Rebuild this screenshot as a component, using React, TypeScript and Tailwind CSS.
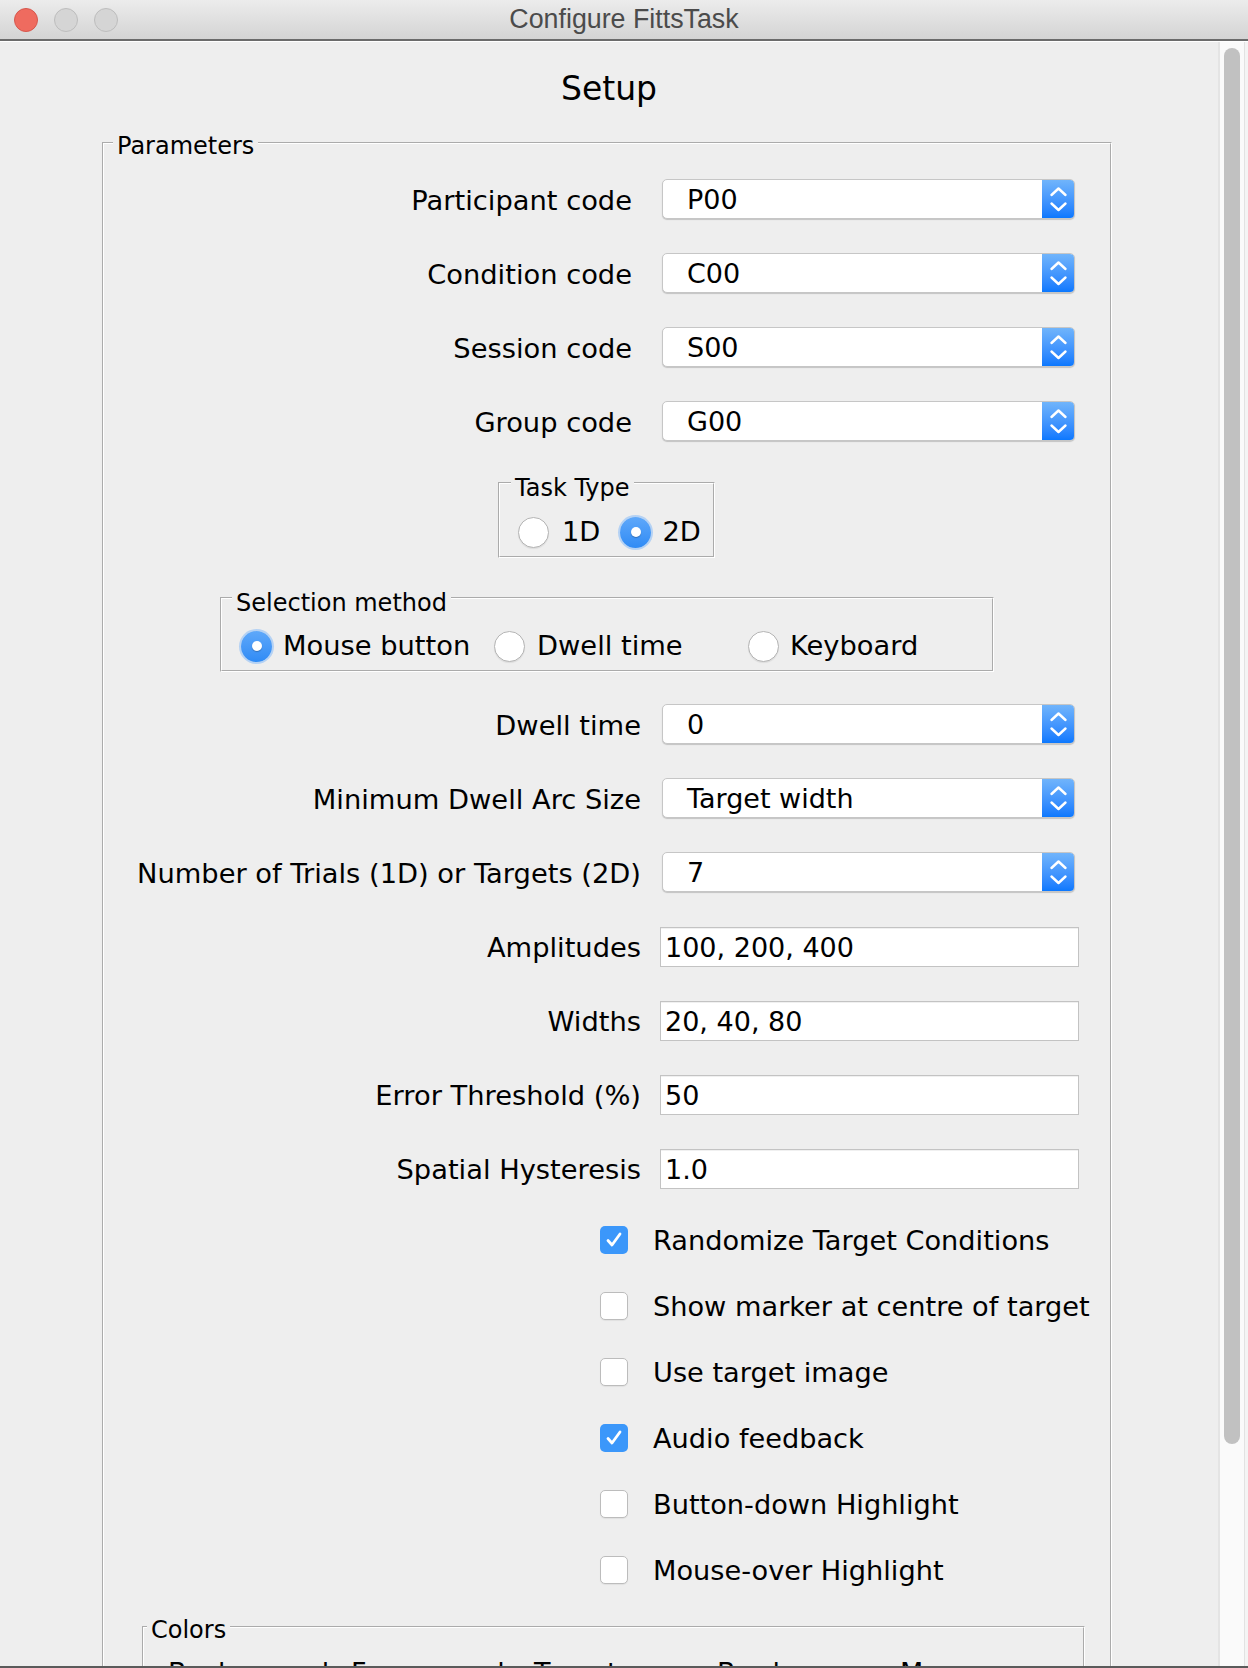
import React from "react";

function Combo({ value }: { value: string }) {
  return (
    <div className="flex h-[40px] w-[413px] overflow-hidden rounded-[5px] border border-[#c6c6c6] bg-white shadow-[0_1px_1px_rgba(0,0,0,0.18)]">
      <div className="flex flex-1 items-center pl-[24px] text-[27px] leading-none">{value}</div>
      <div className="h-full w-[32px] bg-linear-to-b from-[#70b4fb] to-[#0a78fe]">
        <svg width="32" height="40" viewBox="0 0 32 40" fill="none">
          <polyline points="9.5,15 16.5,8.5 23.5,15" stroke="white" strokeWidth="2.4" strokeLinecap="round" strokeLinejoin="round" />
          <polyline points="9.5,23.5 16.5,30 23.5,23.5" stroke="white" strokeWidth="2.4" strokeLinecap="round" strokeLinejoin="round" />
        </svg>
      </div>
    </div>
  );
}

function TextField({ value }: { value: string }) {
  return (
    <div className="flex h-[40px] w-[419px] items-center border border-[#c3c3c3] bg-white pl-[4px] text-[27px] leading-none shadow-[inset_0_1px_0_rgba(0,0,0,0.06)]">
      {value}
    </div>
  );
}

function ComboRow({ label, value, labelW, gap }: { label: string; value: string; labelW: string; gap: string }) {
  return (
    <div className={`flex items-center ${gap}`}>
      <div className={`${labelW} pt-[3px] text-right text-[27.3px] leading-[32px] whitespace-nowrap`}>{label}</div>
      <Combo value={value} />
    </div>
  );
}

function FieldRow({ label, value }: { label: string; value: string }) {
  return (
    <div className="flex items-center gap-[19px]">
      <div className="w-[537px] pt-[2px] text-right text-[27.3px] leading-[32px] whitespace-nowrap">{label}</div>
      <TextField value={value} />
    </div>
  );
}

function Radio({ checked }: { checked?: boolean }) {
  if (checked) {
    return (
      <div className="flex h-[31px] w-[31px] shrink-0 items-center justify-center rounded-full bg-linear-to-b from-[#5ea8fa] to-[#2f8bf5] shadow-[0_0_0_2px_rgba(110,175,250,0.45)]">
        <div className="h-[10px] w-[10px] rounded-full bg-white shadow-[0_1px_1px_rgba(0,0,0,0.25)]" />
      </div>
    );
  }
  return (
    <div className="h-[31px] w-[31px] shrink-0 rounded-full border border-[#b4b4b4] bg-white shadow-[0_1px_1px_rgba(0,0,0,0.08)]" />
  );
}

function Check({ checked, label }: { checked?: boolean; label: string }) {
  return (
    <div className="ml-[496px] flex h-[32px] items-center gap-[25px]">
      {checked ? (
        <div className="flex h-[28px] w-[28px] shrink-0 items-center justify-center rounded-[5px] bg-[#3b97fa]">
          <svg width="22" height="22" viewBox="0 0 22 22" fill="none">
            <polyline points="5,11.5 9,16 17,5" stroke="white" strokeWidth="2.8" strokeLinecap="round" strokeLinejoin="round" />
          </svg>
        </div>
      ) : (
        <div className="h-[28px] w-[28px] shrink-0 rounded-[5px] border border-[#bcbcbc] bg-white shadow-[0_1px_1px_rgba(0,0,0,0.06)]" />
      )}
      <div className="pt-[2px] text-[27.2px] leading-[32px] whitespace-nowrap">{label}</div>
    </div>
  );
}

const groove = "border-2 [border-style:groove] border-white";

export default function App() {
  return (
    <div className="flex h-[1668px] w-[1248px] flex-col overflow-hidden bg-[#eeeeee] font-['DejaVu_Sans',sans-serif] text-black">
      {/* Title bar */}
      <div className="relative flex h-[41px] shrink-0 items-center border-b-2 border-[#6b6b6b] bg-linear-to-b from-[#ececec] to-[#d4d4d4]">
        <div className="ml-[14px] flex gap-[16px]">
          <div className="h-[24px] w-[24px] rounded-full border border-[#d6574d] bg-[#ef6b5f]" />
          <div className="h-[24px] w-[24px] rounded-full border border-[#bdbdbd] bg-[#d5d5d5]" />
          <div className="h-[24px] w-[24px] rounded-full border border-[#bdbdbd] bg-[#d5d5d5]" />
        </div>
        <div className="absolute inset-x-0 top-0 flex h-[39px] items-center justify-center font-['Liberation_Sans',sans-serif] text-[26.8px] text-[#4b4b4b]">
          Configure FittsTask
        </div>
      </div>
      <div className="h-px shrink-0 bg-white" />

      <div className="flex min-h-0 flex-1">
        <main className="min-w-0 flex-1 overflow-hidden">
          <div className="mt-[27px] text-center text-[33px] leading-[40px]">Setup</div>

          <fieldset className={`mt-[20px] ml-[102px] w-[1010px] ${groove} pt-[22px]`}>
            <legend className="ml-[9px] translate-y-[3px] px-[4px] text-[24px] leading-[28px]">Parameters</legend>

            <div className="flex flex-col gap-[34px]">
              <ComboRow label="Participant code" value="P00" labelW="w-[528px]" gap="gap-[30px]" />
              <ComboRow label="Condition code" value="C00" labelW="w-[528px]" gap="gap-[30px]" />
              <ComboRow label="Session code" value="S00" labelW="w-[528px]" gap="gap-[30px]" />
              <ComboRow label="Group code" value="G00" labelW="w-[528px]" gap="gap-[30px]" />
            </div>

            <fieldset className={`mt-[28px] ml-[394px] w-[217px] ${groove} pt-[19px] pb-[8px]`}>
              <legend className="ml-[11px] translate-y-[5px] px-[4px] text-[24px] leading-[28px]">Task Type</legend>
              <div className="flex items-center pl-[18px]">
                <div className="flex items-center gap-[13px]">
                  <Radio />
                  <span className="text-[27.3px] leading-[32px]">1D</span>
                </div>
                <div className="ml-[20px] flex items-center gap-[11px]">
                  <Radio checked />
                  <span className="text-[27.3px] leading-[32px]">2D</span>
                </div>
              </div>
            </fieldset>

            <fieldset className={`mt-[26px] ml-[116px] w-[774px] ${groove} pt-[18px] pb-[8px]`}>
              <legend className="ml-[10px] translate-y-[5px] px-[4px] text-[24px] leading-[28px]">Selection method</legend>
              <div className="grid grid-cols-[253px_254px_1fr] items-center pl-[19px]">
                <div className="flex items-center gap-[11px]">
                  <Radio checked />
                  <span className="text-[27.3px] leading-[32px] whitespace-nowrap">Mouse button</span>
                </div>
                <div className="flex items-center gap-[12px]">
                  <Radio />
                  <span className="text-[27.3px] leading-[32px] whitespace-nowrap">Dwell time</span>
                </div>
                <div className="flex items-center gap-[11px]">
                  <Radio />
                  <span className="text-[27.3px] leading-[32px] whitespace-nowrap">Keyboard</span>
                </div>
              </div>
            </fieldset>

            <div className="mt-[32px] flex flex-col gap-[34px]">
              <ComboRow label="Dwell time" value="0" labelW="w-[537px]" gap="gap-[21px]" />
              <ComboRow label="Minimum Dwell Arc Size" value="Target width" labelW="w-[537px]" gap="gap-[21px]" />
              <ComboRow label="Number of Trials (1D) or Targets (2D)" value="7" labelW="w-[537px]" gap="gap-[21px]" />
            </div>

            <div className="mt-[35px] flex flex-col gap-[34px]">
              <FieldRow label="Amplitudes" value="100, 200, 400" />
              <FieldRow label="Widths" value="20, 40, 80" />
              <FieldRow label="Error Threshold (%)" value="50" />
              <FieldRow label="Spatial Hysteresis" value="1.0" />
            </div>

            <div className="mt-[35px] flex flex-col gap-[34px]">
              <Check checked label="Randomize Target Conditions" />
              <Check label="Show marker at centre of target" />
              <Check label="Use target image" />
              <Check checked label="Audio feedback" />
              <Check label="Button-down Highlight" />
              <Check label="Mouse-over Highlight" />
            </div>

            <fieldset className={`mt-[27px] ml-[38px] w-[932px] ${groove} h-[200px] pt-[16px]`}>
              <legend className="ml-[3px] translate-y-[3px] px-[4px] text-[24px] leading-[28px]">Colors</legend>
              <div className="ml-[24px] grid grid-cols-[183px_183px_183px_183px_183px] text-[27px] leading-[32px]">
                <span>Background</span>
                <span>Foreground</span>
                <span>Target</span>
                <span>Border</span>
                <span>Mouse</span>
              </div>
            </fieldset>
          </fieldset>
        </main>

        {/* Scrollbar */}
        <div className="flex w-[30px] shrink-0 border-l-2 border-[#e4e4e4] bg-[#fafafa]">
          <div className="ml-[4px] mt-[6px] h-[1396px] w-[16px] rounded-full bg-[#c1c1c1]" />
          <div className="ml-auto w-px bg-[#e2e2e2]" />
          <div className="w-[3px] bg-[#f4f4f4]" />
        </div>
      </div>
      <div className="h-[2px] shrink-0 bg-[#5a5a5a]" />
    </div>
  );
}
